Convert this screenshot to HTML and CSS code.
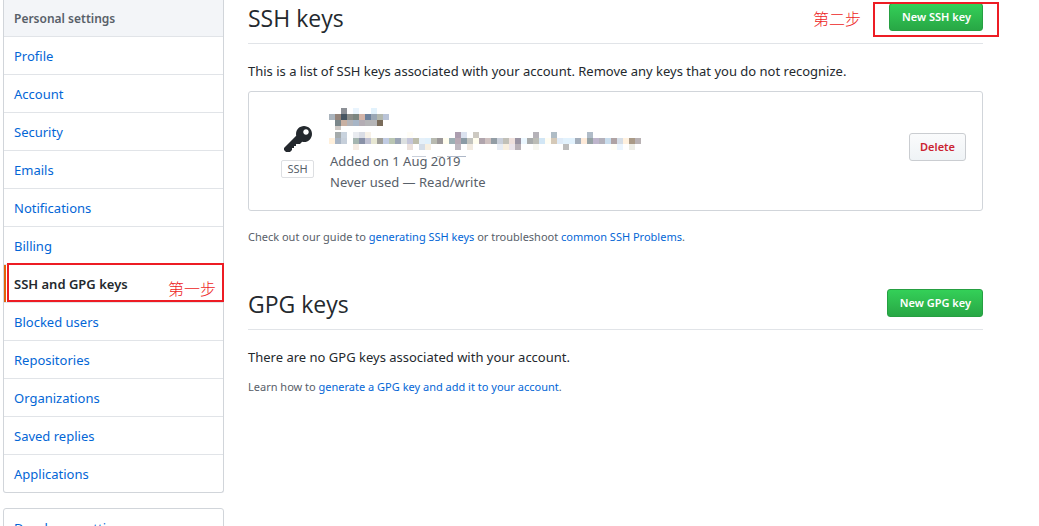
FILE: index.html
```html
<!DOCTYPE html>
<html lang="en">
<head>
<meta charset="utf-8">
<title>SSH and GPG keys</title>
<link rel="stylesheet" href="styles.css">
</head>
<body>
<div class="page">
  <aside class="sidebar">
    <nav class="menu" aria-label="Personal settings">
      <h3 class="menu-heading">Personal settings</h3>
      <a class="menu-item" href="#">Profile</a>
      <a class="menu-item" href="#">Account</a>
      <a class="menu-item" href="#">Security</a>
      <a class="menu-item" href="#">Emails</a>
      <a class="menu-item" href="#">Notifications</a>
      <a class="menu-item" href="#">Billing</a>
      <a class="menu-item selected" href="#">SSH and GPG keys<span class="mark mark-nav"><span class="step">第一步</span></span></a>
      <a class="menu-item" href="#">Blocked users</a>
      <a class="menu-item" href="#">Repositories</a>
      <a class="menu-item" href="#">Organizations</a>
      <a class="menu-item" href="#">Saved replies</a>
      <a class="menu-item" href="#">Applications</a>
    </nav>
    <nav class="menu menu-second" aria-label="Developer settings">
      <a class="menu-item" href="#">Developer settings</a>
    </nav>
  </aside>
  <main class="content">
    <section>
      <header class="subhead">
        <h2>SSH keys</h2>
        <span class="step">第二步</span>
        <span class="marked"><button class="btn btn-primary" type="button">New SSH key</button><span class="mark mark-button"></span></span>
      </header>
      <p>This is a list of SSH keys associated with your account. Remove any keys that you do not recognize.</p>
      <div class="key-box">
        <div class="key-type">
          <svg width="28" height="32" viewBox="0 0 14 16" aria-hidden="true"><path fill="#24292e" fill-rule="evenodd" d="M12.83 2.17C12.08 1.42 11.14 1.03 10 1c-1.13.03-2.08.42-2.83 1.17S6.04 3.86 6.01 5c0 .3.03.59.09.89L0 12v1l1 1h2l1-1v-1h1v-1h1v-1h2l1.09-1.11c.3.08.59.11.91.11 1.14-.03 2.08-.42 2.83-1.17S13.97 6.14 14 5c-.03-1.14-.42-2.08-1.17-2.83zM11 5.38c-.77 0-1.38-.61-1.38-1.38 0-.77.61-1.38 1.38-1.38.77 0 1.38.61 1.38 1.38 0 .77-.61 1.38-1.38 1.38z"/></svg>
          <span class="badge">SSH</span>
        </div>
        <div class="key-info">
          <svg class="mosaic" id="mosaic" width="312" height="49" viewBox="0 0 312 49" shape-rendering="crispEdges" aria-hidden="true"></svg>
          <span>Added on 1 Aug 2019</span>
          <span>Never used — Read/write</span>
        </div>
        <button class="btn btn-danger" type="button">Delete</button>
      </div>
      <p class="note">Check out our guide to <a href="#">generating SSH keys</a> or troubleshoot <a href="#">common SSH Problems</a>.</p>
    </section>
    <section class="gpg">
      <header class="subhead">
        <h2>GPG keys</h2>
        <button class="btn btn-primary" type="button">New GPG key</button>
      </header>
      <p>There are no GPG keys associated with your account.</p>
      <p class="note">Learn how to <a href="#">generate a GPG key and add it to your account</a>.</p>
    </section>
  </main>
</div>
<script src="mosaic.js"></script>
</body>
</html>
```
FILE: styles.css
```css
* { box-sizing: border-box; }
body {
  margin: 0;
  height: 100vh;
  overflow: hidden;
  background: #fff;
  color: #24292e;
  font: 13px/20px "Noto Sans", "Noto Sans CJK SC", sans-serif;
}
h2, h3, p { margin: 0; }
a { color: #0366d6; text-decoration: none; }

.page { display: flex; gap: 24px; padding: 0 56px 0 3px; }
.sidebar { flex: 0 0 221px; }
.menu { border: 1px solid #d1d5da; border-radius: 3px; }
.menu:first-child { border-top: 0; border-radius: 0 0 3px 3px; }
.menu-second { margin-top: 15px; }
.menu-heading {
  padding: 9px 10px 7px;
  background: #f3f5f8;
  border-bottom: 1px solid #e1e4e8;
  color: #586069;
  font-size: 12px;
  font-weight: 600;
}
.menu-item {
  display: block;
  position: relative;
  padding: 9px 10px 8px;
  border-bottom: 1px solid #e1e4e8;
}
.menu-item:last-child { border-bottom: 0; padding-bottom: 9px; margin-bottom: -1px; }
.selected { color: #24292e; font-weight: 600; }
.selected::before {
  content: "";
  position: absolute;
  inset: 0 auto 0 0;
  width: 2px;
  background: #e36209;
}

.mark { position: absolute; border: 2px solid #ed1c24; pointer-events: none; }
.mark-nav {
  inset: -2px -1px 0 3px;
  display: flex;
  justify-content: flex-end;
  align-items: flex-end;
  padding: 0 6px 2px 0;
}
.mark-button { inset: -1px -16px -6px -16px; }
.step {
  color: #ed1c24;
  font: 300 16px/20px "Noto Sans CJK SC", sans-serif;
}

.content { flex: 1; min-width: 0; }
.subhead {
  display: flex;
  align-items: center;
  padding: 3px 0 12px;
  margin-bottom: 17px;
  border-bottom: 1px solid #e1e4e8;
}
.subhead h2 {
  flex: 1;
  padding-top: 2px;
  font: 400 23px/26px "Open Sans", sans-serif;
}
.subhead .step { margin-right: 28px; padding-top: 2px; }
.marked { position: relative; display: flex; }
.btn {
  height: 28px;
  padding: 0 10px;
  border: 1px solid #cacdd1;
  border-radius: 3px;
  font: 600 11px/20px "Noto Sans", sans-serif;
  white-space: nowrap;
}
.btn-primary {
  padding: 0 11px 0 12px;
  color: #fff;
  border-color: #269f42;
  background: linear-gradient(#34d058, #28a745);
}
.btn-danger {
  margin-bottom: 10px;
  color: #cb2431;
  background: linear-gradient(#fafbfc, #eff3f6);
}

.key-box {
  display: flex;
  align-items: center;
  min-height: 120px;
  margin: 10px 0 16px;
  padding: 16px 16px 15px;
  border: 1px solid #d1d5da;
  border-radius: 3px;
}
.key-type {
  display: flex;
  flex-direction: column;
  align-items: center;
  gap: 4px;
  width: 33px;
  margin: 0 15px 0 16px;
  padding-bottom: 2px;
}
.badge {
  padding: 0 5px;
  border: 1px solid #dddfe2;
  border-radius: 2px;
  color: #586069;
  font-size: 11px;
  line-height: 16px;
}
.key-info {
  display: flex;
  flex: 1;
  flex-direction: column;
  padding-bottom: 2px;
  color: #586069;
  line-height: 21px;
}
.key-info span { padding-left: 1px; }
.mosaic { position: relative; margin-bottom: -6px; }
.note { color: #586069; font-size: 11px; }
.gpg { margin-top: 39px; }
.gpg p + p { margin-top: 10px; }
```
FILE: mosaic.js
```js
// Pixelated cover over the key's name and fingerprint: [row, first column, colours].
const SIZE = 6;
const runs = [
  [0, 2, "8c9096 - e9f4fd - - e2f2fc"],
  [1, 0, "aab4bd 94847a 465561 8b8d89 7b8681 d3b4a8 6d829d 9aa7b5 b3b8ae bac4d8"],
  [2, 1, "7a868a c8b0a2 b3b4b9 a7b5c6 b4adb4 b5b5b7 b5b5b7 7a6c5a"],
  [4, 1, "a5abac c9d3de - e9ebf0 dadde5 f7f1e7 - - - - - - fffdf6"],
  [4, 21, "ac9eaf dbe2ef - cdc9c1"],
  [4, 34, "b5b2b8 - - afbcc5 - - - - - b0bcc8"],
  [5, 0, "fff0dc a8b4c4 c6cfda - a5b5b0 8991a7 c0c1d2 e7e7d3 a09f99 c1cce3 bac6b3 9aa4b5 dce0e0 c5c6da bdbdab e5f0f9 e0f0fb"],
  [5, 17, "b8bab0 9c9899 fffdee 9dafb4 b8a9b4 8b9ba5 c3c4bf fffdee b0a5ad cfc1c0 929da5 c9cfda c1c0b8 eee0dc 9a94a3 ebf7ff a8abab bbbcb5"],
  [5, 35, "d2e6f5 fffdf3 d5c9b8 dfebf8 e2f2fd e2f2fd a4aebb fdead9 96a2a5 beb5cc b3b1bb c9dded afa3a4 d5dde6 fff1df aa9a87 b9b2b4"],
  [6, 4, "f6ece4 - - - - - - - - ebe1dc - d4dde8 f7efe1"],
  [6, 21, "bdb7bf - f1eae0 - - - - e7ecf4 f8efe0 ebe5eb b8b1b7 - - f7f7f0"],
  [6, 39, "bdbdbd - - - - - - - fffef6 ebf5fe - edede6"]
];
const svg = document.getElementById("mosaic");

function addRect(x, y, width, height, fill) {
  const rect = document.createElementNS("http://www.w3.org/2000/svg", "rect");
  Object.entries({ x, y, width, height, fill }).forEach(([name, value]) => rect.setAttribute(name, value));
  svg.appendChild(rect);
}

runs.forEach(([row, start, colours]) => {
  colours.split(" ").forEach((colour, i) => {
    if (colour !== "-") addRect((start + i) * SIZE, row * SIZE, SIZE, SIZE, "#" + colour);
  });
});
addRect(SIZE, 3 * SIZE, SIZE, 4, "#cec8c4");
addRect(83, 48, 14, 1, "#c9cfda");
addRect(108, 48, 6, 1, "#d8d3d0");
addRect(118, 48, 19, 1, "#aeb8c8");
```
